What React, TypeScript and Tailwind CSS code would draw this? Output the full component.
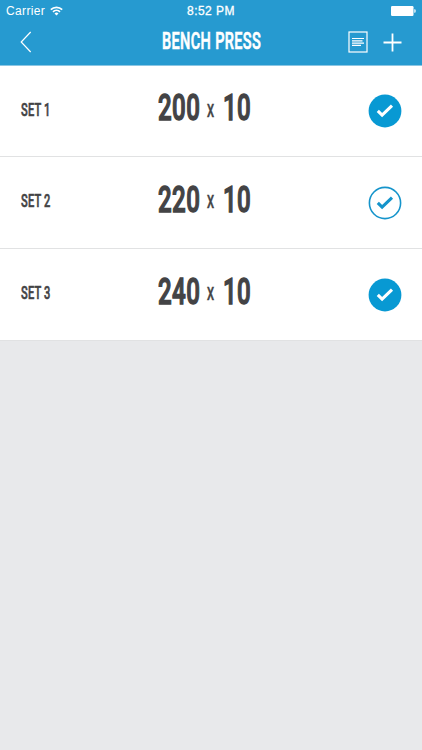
type SetRow = { label: string; weight: string; reps: string; done: boolean; height: string };

const sets: SetRow[] = [
  { label: 'SET 1', weight: '200', reps: '10', done: true, height: 'h-[91px]' },
  { label: 'SET 2', weight: '220', reps: '10', done: false, height: 'h-[92px]' },
  { label: 'SET 3', weight: '240', reps: '10', done: true, height: 'h-[92px]' },
];

function Check({ done }: { done: boolean }) {
  return (
    <svg width="34" height="34" viewBox="0 0 34 34" fill="none">
      <circle cx="17" cy="17" r={done ? 16.4 : 15.6} fill={done ? '#0899d3' : '#fff'} stroke={done ? 'none' : '#1594cb'} strokeWidth="1.6" />
      <path d="M9.8 16.8 L14.1 21 L24 11.6" stroke={done ? '#fff' : '#1594cb'} strokeWidth="3.1" />
    </svg>
  );
}

function StatusBar() {
  return (
    <div className="grid h-[22px] grid-cols-3 items-center px-[6px] font-['Liberation_Sans',sans-serif] text-[12px] font-normal leading-none">
      <div className="flex items-center gap-[5px]">
        <span className="tracking-[0.35px]">Carrier</span>
        <svg width="13" height="10" viewBox="0 0 13 10" fill="none" stroke="#fff" strokeWidth="1.7">
          <path d="M0.8 3.6 A8.2 8.2 0 0 1 12.2 3.6" />
          <path d="M3 5.9 A5 5 0 0 1 10 5.9" />
          <path d="M6.5 9.4 L4.5 7.5 A2.8 2.8 0 0 1 8.5 7.5Z" fill="#fff" stroke="none" />
        </svg>
      </div>
      <span className="text-center tracking-[0.45px] [-webkit-text-stroke:0.3px_white]">8:52 PM</span>
      <svg className="justify-self-end" width="25" height="10" viewBox="0 0 25 10" fill="#fff">
        <rect width="22.5" height="10" rx="1.2" />
        <path d="M23.3 3.3 h0.5 q0.8 0 0.8 1 v1.4 q0 1 -0.8 1 h-0.5z" />
      </svg>
    </div>
  );
}

export default function App() {
  return (
    <div className="flex h-[750px] w-[422px] flex-col overflow-hidden bg-[#e8e9eb] font-['Roboto',sans-serif] font-medium text-[#434345]">
      <header className="h-[66px] shrink-0 border-b border-[#8bc6e3] bg-[#269ad0] text-white">
        <StatusBar />
        <div className="flex h-[40px] items-center pl-[20px] pr-[20px]">
          <svg width="12" height="22" viewBox="0 0 12 22" fill="none" stroke="#fff" strokeWidth="1.2">
            <path d="M10.7 1 L1.2 11 L10.7 21" />
          </svg>
          <h1 className="ml-[130px] w-[186.5px] origin-left scale-x-[0.592] whitespace-nowrap pb-[1px] text-[24.5px] leading-none tracking-[0.6px] [-webkit-text-stroke:0.7px_white]">
            BENCH PRESS
          </h1>
          <div className="flex items-center gap-[15px]">
            <svg width="20" height="22" viewBox="0 0 20 22" fill="none" stroke="#fff" strokeWidth="1.2">
              <rect x="1" y="1" width="18" height="20" />
              <path d="M4 7.5h12M4 9.8h10.5M4 12.1h12M4 14.4h9" />
            </svg>
            <svg width="19" height="19" viewBox="0 0 19 19" fill="none" stroke="#fff" strokeWidth="1.8">
              <path d="M9.5 0.5v18M0.5 9.5h18" />
            </svg>
          </div>
        </div>
      </header>
      <main>
        {sets.map((set) => (
          <div key={set.label} className={`flex items-center border-b border-[#e1e2e3] bg-white pl-[20.5px] ${set.height}`}>
            <div className="w-[137px] pb-[1px]">
              <span className="inline-block origin-left scale-x-[0.6] whitespace-nowrap text-[18.5px] leading-none tracking-[0.3px] [-webkit-text-stroke:0.6px_#434345]">{set.label}</span>
            </div>
            <div className="flex w-[210.5px] items-center pb-[5px] leading-none">
              <div className="w-[49.5px]">
                <span className="inline-block origin-left scale-x-[0.66] text-[36.5px] leading-none tracking-[0.6px] [-webkit-text-stroke:1.4px_#434345]">{set.weight}</span>
              </div>
              <div className="w-[16px] pt-[4px]">
                <span className="inline-block origin-left scale-x-[0.62] text-[18px] leading-none [-webkit-text-stroke:0.5px_#434345]">X</span>
              </div>
              <span className="inline-block origin-left scale-x-[0.66] text-[36.5px] leading-none tracking-[0.6px] [-webkit-text-stroke:1.4px_#434345]">{set.reps}</span>
            </div>
            <Check done={set.done} />
          </div>
        ))}
      </main>
    </div>
  );
}
